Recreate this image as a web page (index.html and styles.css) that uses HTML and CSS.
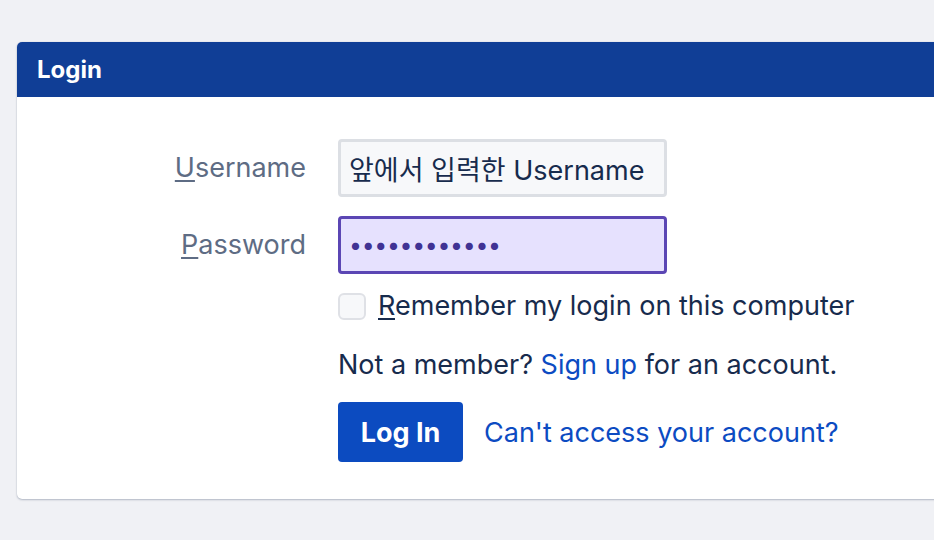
FILE: index.html
```html
<!DOCTYPE html>
<html lang="ko">
<head>
<meta charset="utf-8">
<title>Login</title>
<link rel="stylesheet" href="styles.css">
</head>
<body>
<div class="card">
  <div class="card-header">Login</div>
  <form class="card-body">
    <label class="label" for="user"><u>U</u>sername</label>
    <input class="field field-user" id="user" type="text" value="앞에서 입력한 Username">
    <label class="label label-pass" for="pass"><u>P</u>assword</label>
    <input class="field field-pass" id="pass" type="password" value="abcdefghijkl">
    <div class="remember">
      <span class="checkbox"></span>
      <span><u>R</u>emember my login on this computer</span>
    </div>
    <div class="signup">Not a member? <a href="#" class="link">Sign up</a> for an account.</div>
    <div class="actions">
      <button type="button" class="btn">Log In</button>
      <a href="#" class="link">Can't access your account?</a>
    </div>
  </form>
</div>
</body>
</html>
```

FILE: styles.css
```css
html, body {
  margin: 0;
  padding: 0;
  background: #f0f1f5;
  overflow: hidden;
  width: 934px;
  height: 540px;
}
body {
  font-family: Inter, "Noto Sans CJK KR", sans-serif;
  color: #172b4d;
  padding-top: 42px;
  padding-left: 17px;
  box-sizing: border-box;
}
.card {
  width: 1000px;
  background: #ffffff;
  border-radius: 5px;
  box-shadow: 0 1px 2px rgba(9, 30, 66, 0.25), 0 0 1px rgba(9, 30, 66, 0.2);
  overflow: hidden;
}
.card-header {
  height: 55px;
  background: #103e96;
  color: #ffffff;
  font-weight: 700;
  font-size: 24px;
  line-height: 55px;
  padding-left: 20px;
}
.card-body {
  display: grid;
  grid-template-columns: 289px 1fr;
  column-gap: 32px;
  align-items: center;
  padding: 42px 0 37px 0;
  font-size: 27px;
  margin: 0;
}
.label {
  text-align: right;
  color: #5e6c84;
  font-size: 27px;
  line-height: 30px;
}
.label-pass {
  margin-top: 19px;
}
.label u, .remember u {
  text-decoration-thickness: 2px;
  text-underline-offset: 3px;
}
.field {
  width: 329px;
  height: 58px;
  box-sizing: border-box;
  border-radius: 4px;
  font-family: Inter, "Noto Sans CJK KR", sans-serif;
  font-size: 27px;
  padding: 0 8px;
  margin: 0;
  outline: none;
  color: #172b4d;
}
.field-user {
  background: #f7f8fa;
  border: 3px solid #dcdfe4;
}
.field-pass {
  margin-top: 19px;
  background: #e6e1fe;
  border: 3px solid #5b46b4;
  color: #403294;
  font-size: 23px;
  letter-spacing: -0.3px;
}
.remember {
  grid-column: 2;
  margin-top: 18px;
  display: flex;
  align-items: center;
  gap: 12px;
  line-height: 28px;
}
.checkbox {
  width: 28px;
  height: 27px;
  box-sizing: border-box;
  border: 2px solid #dfe1e6;
  background: #f7f8fa;
  border-radius: 6px;
  flex: none;
}
.signup {
  grid-column: 2;
  margin-top: 30px;
  line-height: 30px;
}
.link {
  color: #0c4bc2;
  text-decoration: none;
}
.actions {
  grid-column: 2;
  margin-top: 22px;
  display: flex;
  align-items: center;
  gap: 21px;
}
.btn {
  width: 125px;
  height: 60px;
  border: none;
  border-radius: 4px;
  background: #0c4bc0;
  color: #ffffff;
  font-family: Inter, "Noto Sans CJK KR", sans-serif;
  font-size: 27px;
  font-weight: 700;
  padding: 0;
}
```
